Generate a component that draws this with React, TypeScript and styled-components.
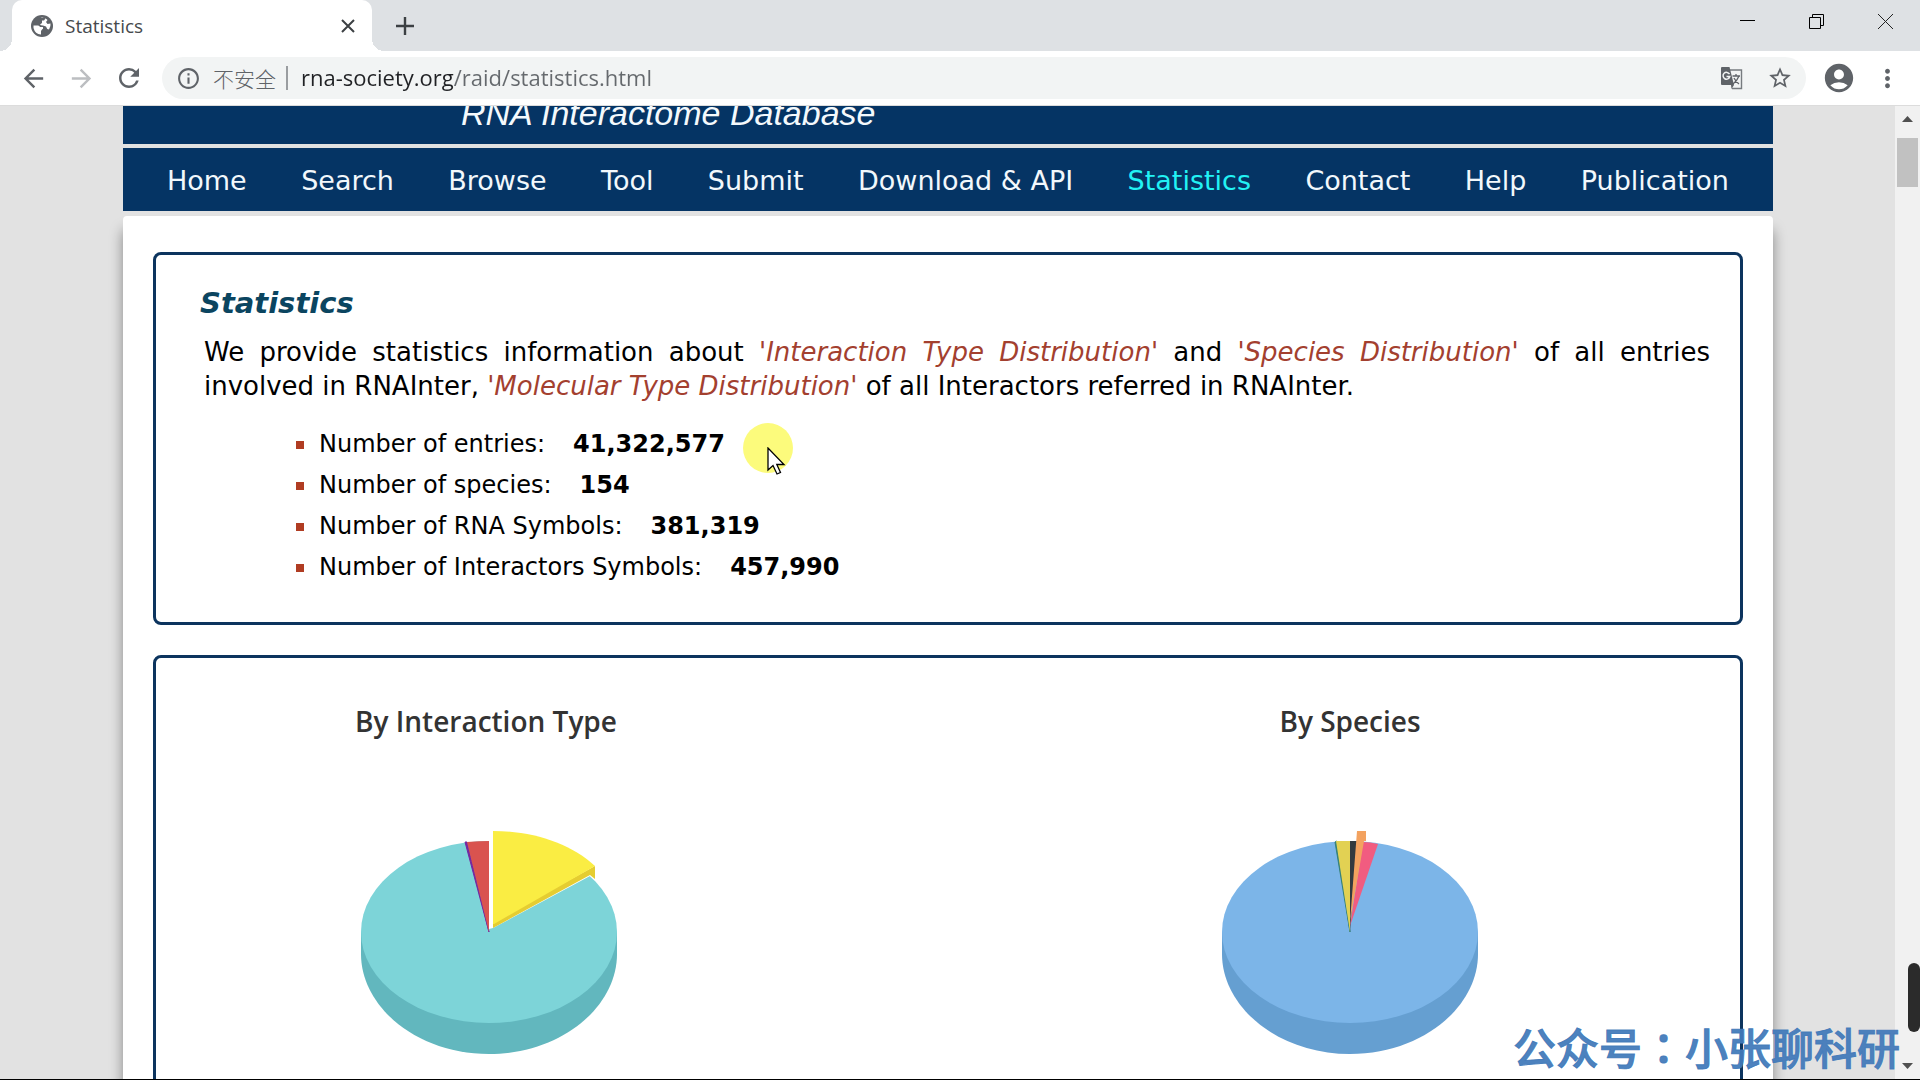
import React from 'react';
import styled, { createGlobalStyle } from 'styled-components';
import { MdArrowBack, MdArrowForward, MdRefresh, MdInfoOutline, MdStarBorder, MdAccountCircle, MdMoreVert } from 'react-icons/md';

const Global = createGlobalStyle`
  *, *::before, *::after { box-sizing: border-box; }
  html, body { margin: 0; padding: 0; }
  body { background: #e2e2e2; overflow: hidden; font-family: 'DejaVu Sans', sans-serif; color: #000; }
  button, input { font: inherit; border: 0; padding: 0; background: none; color: inherit; outline: none; }
  ul, h1, h2, p { margin: 0; padding: 0; }
`;

const Browser = styled.div`
  position: relative;
  display: flex;
  flex-direction: column;
  height: 100vh;
  overflow: hidden;
  border-bottom: 1px solid #000;
`;

const TabStrip = styled.header`
  flex: none;
  display: flex;
  height: 51px;
  padding-left: 12px;
  background: #dee1e4;
`;

const Tab = styled.div`
  position: relative;
  display: flex;
  align-items: center;
  gap: 12px;
  width: 360px;
  padding: 0 13px 0 19px;
  background: #fff;
  border-radius: 10px 10px 0 0;
  color: #46494c;
  font: 19px/24px 'Open Sans', sans-serif;
  &::before, &::after {
    content: '';
    position: absolute;
    bottom: 0;
    width: 12px;
    height: 12px;
  }
  &::before { right: 100%; background: radial-gradient(circle at 0 0, transparent 12px, #fff 12px); }
  &::after { left: 100%; background: radial-gradient(circle at 100% 0, transparent 12px, #fff 12px); }
`;

const TabTitle = styled.span`
  flex: 1;
`;

const IconButton = styled.button<{ $size: number; $tone?: string }>`
  flex: none;
  display: grid;
  place-items: center;
  width: ${(p) => p.$size}px;
  height: ${(p) => p.$size}px;
  color: ${(p) => p.$tone ?? '#5f6368'};
  svg { display: block; }
`;

const NewTab = styled(IconButton)`
  align-self: center;
  margin-left: 17px;
`;

const WindowControls = styled.div`
  display: flex;
  margin-left: auto;
  padding-top: 3px;
`;

const ControlButton = styled.button`
  display: grid;
  place-items: center;
  width: 69px;
  height: 36px;
`;

const Toolbar = styled.div`
  flex: none;
  display: flex;
  align-items: center;
  height: 55px;
  padding: 0 16px;
  background: #fff;
  border-bottom: 1px solid #dcdcdc;
`;

const ButtonGroup = styled.div`
  display: flex;
  gap: 14px;
`;

const Omnibox = styled.form`
  flex: 1;
  display: flex;
  align-items: center;
  height: 42px;
  margin: 0 16px;
  padding: 0 12px 0 14px;
  border-radius: 21px;
  background: #f2f4f4;
  color: #5f6368;
`;

const Security = styled.button`
  display: flex;
  align-items: center;
  gap: 12px;
  height: 24px;
  padding-right: 10px;
  border-right: 2px solid #9a9da0;
  font: 300 21px/24px 'Noto Sans CJK SC', sans-serif;
`;

const Address = styled.input`
  flex: 1;
  min-width: 0;
  height: 32px;
  margin: 0 0 2px 13px;
  font: 22px/32px 'Open Sans', sans-serif;
  color: transparent;
  background: linear-gradient(to right, #202124 153px, #65696d 153px);
  background-clip: text;
`;

const OmniActions = styled.div`
  display: flex;
  gap: 20px;
`;

const Viewport = styled.div`
  flex: 1;
  min-height: 0;
  display: flex;
  background: #e2e2e2;
`;

const Page = styled.div`
  flex: 1;
  min-width: 0;
  display: flex;
  flex-direction: column;
  padding: 0 122px 0 123px;
  overflow: hidden;
`;

const Banner = styled.div`
  flex: none;
  display: flex;
  align-items: flex-end;
  height: 38px;
  padding: 0 338px 11px;
  overflow: hidden;
  background: #053464;
  color: #f4f9fc;
  font: italic 34px/40px 'Liberation Sans', Arial, sans-serif;
`;

const Menu = styled.nav`
  flex: none;
  display: flex;
  justify-content: space-between;
  align-items: center;
  height: 63px;
  margin: 4px 0 5px;
  padding: 2px 44px 0;
  background: #053464;
`;

const MenuLink = styled.a<{ $active?: boolean }>`
  color: ${(p) => (p.$active ? '#22f2f4' : '#f2f8fc')};
  font-size: 27px;
  line-height: 40px;
  text-decoration: none;
  white-space: nowrap;
`;

const Content = styled.main`
  flex: none;
  display: flex;
  flex-direction: column;
  gap: 30px;
  padding: 36px 30px;
  background: #fff;
  border-radius: 4px;
  box-shadow: 0 14px 14px rgba(0, 0, 0, 0.4);
`;

const Panel = styled.section`
  border: 3px solid #0c345e;
  border-radius: 8px;
`;

const Summary = styled(Panel)`
  padding: 28px 30px 34px 44px;
`;

const Title = styled.h1`
  color: #0b4560;
  font-size: 29px;
  font-style: italic;
  line-height: 40px;
`;

const Intro = styled.p`
  padding: 12px 0 21px 4px;
  font-size: 26px;
  line-height: 34px;
  text-align: justify;
`;

const Highlight = styled.em`
  color: #a3402f;
`;

const Facts = styled.ul`
  list-style: none;
  padding-left: 96px;
`;

const Fact = styled.li`
  display: flex;
  align-items: center;
  font-size: 24px;
  line-height: 41px;
  &::before {
    content: '';
    width: 8px;
    height: 8px;
    margin-right: 15px;
    background: #b03c22;
  }
  strong { margin-left: 28px; }
`;

const Charts = styled(Panel)`
  display: grid;
  grid-template-columns: 11fr 13fr;
  column-gap: 144px;
  padding: 43px 0 60px;
`;

const Chart = styled.figure`
  display: flex;
  flex-direction: column;
  align-items: center;
  gap: 88px;
  margin: 0;
`;

const ChartTitle = styled.figcaption`
  color: #333;
  font: 600 28px/40px 'Open Sans', sans-serif;
`;

const Scrollbar = styled.div`
  flex: none;
  display: flex;
  flex-direction: column;
  align-items: center;
  width: 25px;
  background: #f1f1f1;
`;

const ScrollArrow = styled.button`
  display: grid;
  place-items: center;
  width: 25px;
  height: 26px;
`;

const Thumb = styled.div`
  width: 21px;
  height: 49px;
  margin: 6px 0 auto;
  background: #c1c1c1;
`;

const SideHandle = styled.div`
  position: absolute;
  right: 0;
  bottom: 47px;
  width: 12px;
  height: 69px;
  border-radius: 6px;
  background: #2b2b2b;
`;

const Pointer = styled.div`
  position: absolute;
  left: 743px;
  top: 423px;
  width: 50px;
  height: 50px;
  border-radius: 50%;
  background: #fcfb7c;
  svg { position: absolute; left: 24px; top: 24px; }
`;

const Watermark = styled.div`
  position: absolute;
  right: 20px;
  bottom: 2px;
  color: rgba(66, 122, 186, 0.94);
  font: 500 43px/62px 'Noto Sans CJK SC', sans-serif;
  -webkit-text-stroke: 1px rgba(66, 122, 186, 0.94);
`;

const Colon = styled.span`
  font-family: 'Noto Sans CJK TC', sans-serif;
`;

const menu = ['Home', 'Search', 'Browse', 'Tool', 'Submit', 'Download & API', 'Statistics', 'Contact', 'Help', 'Publication'];

const facts = [
  ['Number of entries:', '41,322,577'],
  ['Number of species:', '154'],
  ['Number of RNA Symbols:', '381,319'],
  ['Number of Interactors Symbols:', '457,990'],
];

function Globe() {
  return (
    <svg width="22" height="22" viewBox="0 0 22 22" aria-hidden="true">
      <circle cx="11" cy="11" r="11" fill="#5f6368" />
      <path d="M2.500 10.500H7Q8.500 10.500 9 12H12Q12.500 14 11 14.500L10 16V19.500Q4 19 2.500 13Z" fill="#fff" />
      <path d="M8 3Q12 1.500 14.500 3.500L13 5.500H11V8L9 9.500Q9.500 10.500 12 10.500L15 11.500Q15.500 14 18 14.500Q20 11 19.500 8.500L16.500 9L15 7L16.500 5L14 3Q11 1.500 8 3Z" fill="#fff" />
    </svg>
  );
}

function InteractionPie() {
  return (
    <svg width="266" height="226" viewBox="-136 -103 266 226" role="img" aria-label="Interaction types">
      <path d="M-128 0V22C-128 75-72 122 0 122S128 75 128 22V0Z" fill="#62b7be" />
      <ellipse rx="128" ry="91" fill="#7dd4d8" />
      <path d="M0 0L-24-90L-22-90Z" fill="#7527a0" stroke="#7527a0" />
      <path d="M0-3V-94H106V-60L101-56L4-4Z" fill="#fff" />
      <path d="M0 0L-22-90Q-10-91 0-91Z" fill="#d9534f" />
      <path d="M4-10L106-66V-53L101-57L4-4Z" fill="#e5cd31" />
      <path d="M4-8V-101C45-101 82-88 106-66L5-8Z" fill="#faed43" />
    </svg>
  );
}

function SpeciesPie() {
  return (
    <svg width="266" height="226" viewBox="-133 -103 266 226" role="img" aria-label="Species">
      <path d="M-128 0V22C-128 75-72 122 0 122S128 75 128 22V0Z" fill="#659fd1" />
      <ellipse rx="128" ry="91" fill="#7cb5e8" />
      <path d="M0 0L-15-90L-13-91Z" fill="#348178" stroke="#348178" />
      <path d="M0 0L-14-91H1Z" fill="#e2d153" />
      <path d="M0 0V-91H7Z" fill="#333a3f" />
      <path d="M0-6L13-90Q20-90 28-88Z" fill="#f15c80" />
      <path d="M0-10L7-101H16V-91H14Z" fill="#f3a25f" />
    </svg>
  );
}

export default function App() {
  return (
    <>
      <Global />
      <Browser>
        <TabStrip>
          <Tab>
            <Globe />
            <TabTitle>Statistics</TabTitle>
            <IconButton $size={22} $tone="#3c4043" aria-label="Close tab">
              <svg width="14" height="14" viewBox="0 0 14 14" stroke="currentColor" strokeWidth="2"><path d="M1 1L13 13M13 1L1 13" /></svg>
            </IconButton>
          </Tab>
          <NewTab $size={32} $tone="#3c4043" aria-label="New tab">
            <svg width="18" height="18" viewBox="0 0 18 18" stroke="currentColor" strokeWidth="2.4"><path d="M9 0V18M0 9H18" /></svg>
          </NewTab>
          <WindowControls>
            <ControlButton aria-label="Minimize">
              <svg width="15" height="15" viewBox="0 0 15 15" stroke="#000"><path d="M0 6.5H15" /></svg>
            </ControlButton>
            <ControlButton aria-label="Restore">
              <svg width="15" height="15" viewBox="0 0 15 15" fill="none" stroke="#000"><path d="M.5 3.5H11.500V14.500H.5ZM3.500 3.500V.5H14.500V11.500H11.500" /></svg>
            </ControlButton>
            <ControlButton aria-label="Close">
              <svg width="15" height="15" viewBox="0 0 15 15" stroke="#222"><path d="M0 0L15 15M15 0L0 15" /></svg>
            </ControlButton>
          </WindowControls>
        </TabStrip>

        <Toolbar>
          <ButtonGroup>
            <IconButton $size={34} aria-label="Back"><MdArrowBack size={29} /></IconButton>
            <IconButton $size={34} $tone="#bcbec1" aria-label="Forward"><MdArrowForward size={29} /></IconButton>
            <IconButton $size={34} aria-label="Reload"><MdRefresh size={30} /></IconButton>
          </ButtonGroup>
          <Omnibox>
            <Security type="button"><MdInfoOutline size={25} />不安全</Security>
            <Address aria-label="Address" defaultValue="rna-society.org/raid/statistics.html" />
            <OmniActions>
              <IconButton type="button" $size={28} aria-label="Translate">
                <svg width="24" height="24" viewBox="0 0 24 24">
                  <path d="M10 4H21.500V22.500H12" fill="none" stroke="#777b7f" strokeWidth="1.400" />
                  <path d="M2 1H9.500L14 19H2Q1 19 1 18V2Q1 1 2 1ZM11 19H14L11.500 23Z" fill="#5f6368" />
                  <path d="M9.500 8.200A3.400 3.400 0 1 0 9.800 10.500H6.500" fill="none" stroke="#f2f4f4" strokeWidth="1.500" />
                  <path d="M12.500 10H20M16 8V10M19 10Q17 15 13 18M14 12Q16 16 19 18" fill="none" stroke="#5f6368" strokeWidth="1.300" />
                </svg>
              </IconButton>
              <IconButton type="button" $size={28} aria-label="Bookmark"><MdStarBorder size={26} /></IconButton>
            </OmniActions>
          </Omnibox>
          <ButtonGroup>
            <IconButton $size={34} aria-label="Profile"><MdAccountCircle size={34} /></IconButton>
            <IconButton $size={34} aria-label="Menu"><MdMoreVert size={29} /></IconButton>
          </ButtonGroup>
        </Toolbar>

        <Viewport>
          <Page>
            <Banner>RNA Interactome Database</Banner>
            <Menu>
              {menu.map((item) => (
                <MenuLink key={item} href="#" $active={item === 'Statistics'}>{item}</MenuLink>
              ))}
            </Menu>
            <Content>
              <Summary>
                <Title>Statistics</Title>
                <Intro>
                  We provide statistics information about <Highlight>'Interaction Type Distribution'</Highlight> and{' '}
                  <Highlight>'Species Distribution'</Highlight> of all entries involved in RNAInter,{' '}
                  <Highlight>'Molecular Type Distribution'</Highlight> of all Interactors referred in RNAInter.
                </Intro>
                <Facts>
                  {facts.map(([label, value]) => (
                    <Fact key={label}>{label}<strong>{value}</strong></Fact>
                  ))}
                </Facts>
              </Summary>
              <Charts>
                <Chart>
                  <ChartTitle>By Interaction Type</ChartTitle>
                  <InteractionPie />
                </Chart>
                <Chart>
                  <ChartTitle>By Species</ChartTitle>
                  <SpeciesPie />
                </Chart>
              </Charts>
            </Content>
          </Page>
          <Scrollbar>
            <ScrollArrow aria-label="Scroll up">
              <svg width="11" height="6" viewBox="0 0 11 6"><path d="M0 6L5.500 0L11 6Z" fill="#505050" /></svg>
            </ScrollArrow>
            <Thumb />
            <ScrollArrow aria-label="Scroll down">
              <svg width="11" height="6" viewBox="0 0 11 6"><path d="M0 0L5.500 6L11 0Z" fill="#505050" /></svg>
            </ScrollArrow>
          </Scrollbar>
        </Viewport>

        <Pointer>
          <svg width="20" height="29" viewBox="0 0 20 29">
            <path d="M1 1V23L6 18.500L10 27L13.500 25.500L9.800 17.500H17Z" fill="#fff" stroke="#000" strokeWidth="1.300" />
          </svg>
        </Pointer>
        <SideHandle />
        <Watermark>公众号<Colon>：</Colon>小张聊科研</Watermark>
      </Browser>
    </>
  );
}
